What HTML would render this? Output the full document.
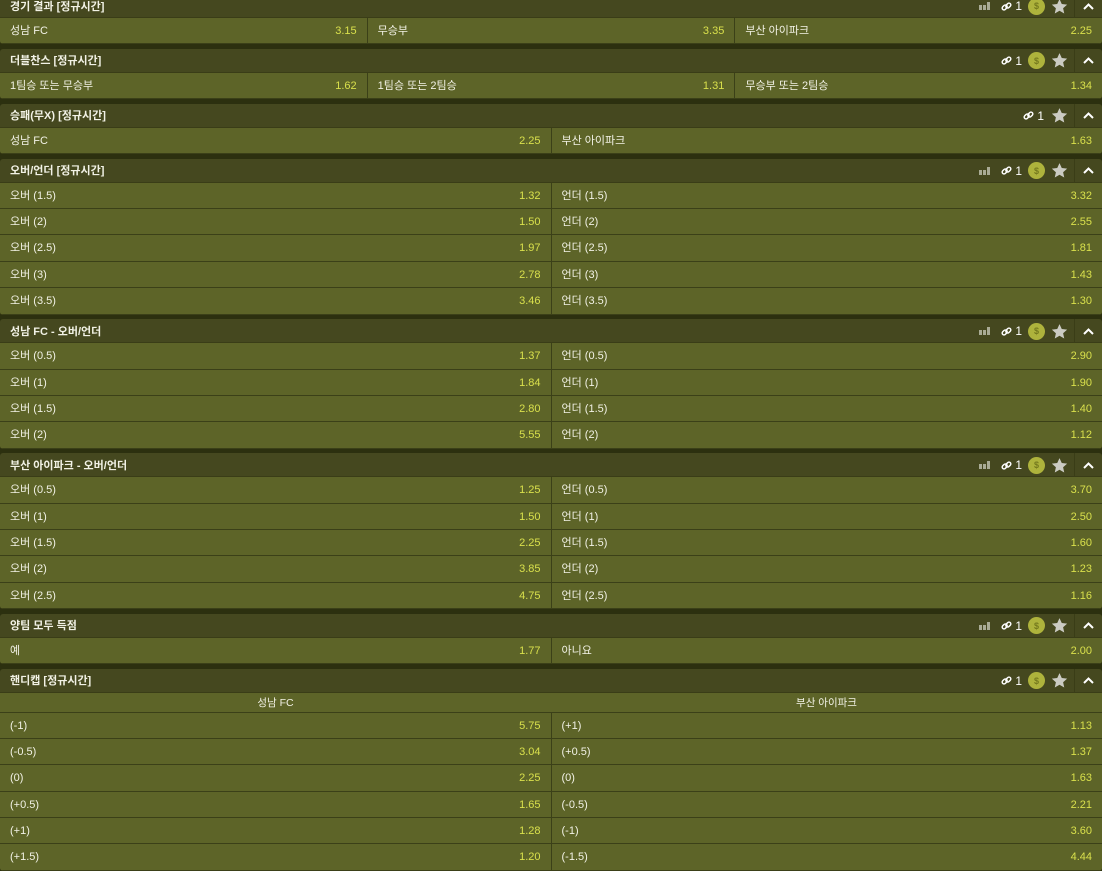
<!DOCTYPE html>
<html><head><meta charset="utf-8"><style>
*{box-sizing:border-box;margin:0;padding:0}
body{width:1102px;height:871px;overflow:hidden;background:#2c300f;font-family:"Liberation Sans","Noto Sans CJK KR",sans-serif;font-size:11px;color:#f2f2e6}
.wrap{position:relative;top:-6px}
.blk{margin-bottom:4.5px;border-radius:3px;overflow:hidden}
.hd{height:24px;background:#45481f;display:flex;align-items:center;padding-left:10px;font-weight:bold;position:relative;border-bottom:1px solid #3a3d17}
.ic{position:absolute;right:0;top:0;height:24px;display:flex;align-items:center}
.ic .bar{width:11px;height:8px;margin-right:11px;display:flex;align-items:flex-end;gap:1px}
.ic .bar i{display:block;width:3px;background:#a9ab95}
.lnk{color:#fff;font-weight:normal;font-size:12px;margin-right:6px;display:flex;align-items:center}
.coin{width:17px;height:17px;border-radius:50%;background:#aeb33c;color:#757a1e;font-size:9px;display:flex;align-items:center;justify-content:center;margin-right:5px;font-weight:bold}
.star{width:18px;display:flex;justify-content:center;margin-right:6px}
.car{width:28px;height:24px;border-left:1px solid #3a3d17;display:flex;align-items:center;justify-content:center}
.row{display:flex;height:26.4px;background:#5d6428;border-bottom:1px solid #3b4018;overflow:hidden}
.c{flex:1;display:block;padding:0 10px;border-right:1px solid #3b4018;line-height:26px;white-space:nowrap}
.c:last-child{border-right:none}
.c b{font-weight:normal;color:#d9e04c;float:right}
.sub{height:20px;background:#5d6428;display:flex;border-bottom:1px solid #3b4018}
.sub div{flex:1;text-align:center;line-height:20px;font-size:10.5px}
</style></head><body><div class="wrap">
<svg width="0" height="0" style="position:absolute"><defs>
<symbol id="st" viewBox="0 0 24 24"><path d="M12 1.5l3.2 7 7.6.8-5.7 5.1 1.6 7.5L12 18l-6.7 3.9 1.6-7.5L1.2 9.3l7.6-.8z" fill="#cbcbc3"/></symbol>
<symbol id="lk" viewBox="0 0 12 12"><g fill="none" stroke="#fff" stroke-width="1.6"><rect x="1" y="5" width="6" height="4" rx="2" transform="rotate(-45 4 7)"/><rect x="5" y="3" width="6" height="4" rx="2" transform="rotate(-45 8 5)"/></g></symbol>
</defs></svg>

<div class="blk"><div class="hd">경기 결과 [정규시간]<div class="ic"><span class="bar"><i style="height:5px"></i><i style="height:5px"></i><i style="height:8px"></i></span><span class="lnk"><svg width="11" height="11"><use href="#lk"/></svg>&nbsp;1</span><span class="coin">$</span><span class="star"><svg width="17" height="17"><use href="#st"/></svg></span><span class="car"><svg width="11" height="7" viewBox="0 0 11 7"><path d="M1 6L5.5 1.5L10 6" stroke="#fff" stroke-width="2" fill="none"/></svg></span></div></div>
<div class="row"><div class="c"><b>3.15</b>성남 FC</div><div class="c"><b>3.35</b>무승부</div><div class="c"><b>2.25</b>부산 아이파크</div></div></div>

<div class="blk"><div class="hd">더블찬스 [정규시간]<div class="ic"><span class="lnk"><svg width="11" height="11"><use href="#lk"/></svg>&nbsp;1</span><span class="coin">$</span><span class="star"><svg width="17" height="17"><use href="#st"/></svg></span><span class="car"><svg width="11" height="7" viewBox="0 0 11 7"><path d="M1 6L5.5 1.5L10 6" stroke="#fff" stroke-width="2" fill="none"/></svg></span></div></div>
<div class="row"><div class="c"><b>1.62</b>1팀승 또는 무승부</div><div class="c"><b>1.31</b>1팀승 또는 2팀승</div><div class="c"><b>1.34</b>무승부 또는 2팀승</div></div></div>

<div class="blk"><div class="hd">승패(무X) [정규시간]<div class="ic"><span class="lnk"><svg width="11" height="11"><use href="#lk"/></svg>&nbsp;1</span><span class="star"><svg width="17" height="17"><use href="#st"/></svg></span><span class="car"><svg width="11" height="7" viewBox="0 0 11 7"><path d="M1 6L5.5 1.5L10 6" stroke="#fff" stroke-width="2" fill="none"/></svg></span></div></div>
<div class="row"><div class="c"><b>2.25</b>성남 FC</div><div class="c"><b>1.63</b>부산 아이파크</div></div></div>

<div class="blk"><div class="hd">오버/언더 [정규시간]<div class="ic"><span class="bar"><i style="height:5px"></i><i style="height:5px"></i><i style="height:8px"></i></span><span class="lnk"><svg width="11" height="11"><use href="#lk"/></svg>&nbsp;1</span><span class="coin">$</span><span class="star"><svg width="17" height="17"><use href="#st"/></svg></span><span class="car"><svg width="11" height="7" viewBox="0 0 11 7"><path d="M1 6L5.5 1.5L10 6" stroke="#fff" stroke-width="2" fill="none"/></svg></span></div></div>
<div class="row"><div class="c"><b>1.32</b>오버 (1.5)</div><div class="c"><b>3.32</b>언더 (1.5)</div></div>
<div class="row"><div class="c"><b>1.50</b>오버 (2)</div><div class="c"><b>2.55</b>언더 (2)</div></div>
<div class="row"><div class="c"><b>1.97</b>오버 (2.5)</div><div class="c"><b>1.81</b>언더 (2.5)</div></div>
<div class="row"><div class="c"><b>2.78</b>오버 (3)</div><div class="c"><b>1.43</b>언더 (3)</div></div>
<div class="row"><div class="c"><b>3.46</b>오버 (3.5)</div><div class="c"><b>1.30</b>언더 (3.5)</div></div></div>

<div class="blk"><div class="hd">성남 FC - 오버/언더<div class="ic"><span class="bar"><i style="height:5px"></i><i style="height:5px"></i><i style="height:8px"></i></span><span class="lnk"><svg width="11" height="11"><use href="#lk"/></svg>&nbsp;1</span><span class="coin">$</span><span class="star"><svg width="17" height="17"><use href="#st"/></svg></span><span class="car"><svg width="11" height="7" viewBox="0 0 11 7"><path d="M1 6L5.5 1.5L10 6" stroke="#fff" stroke-width="2" fill="none"/></svg></span></div></div>
<div class="row"><div class="c"><b>1.37</b>오버 (0.5)</div><div class="c"><b>2.90</b>언더 (0.5)</div></div>
<div class="row"><div class="c"><b>1.84</b>오버 (1)</div><div class="c"><b>1.90</b>언더 (1)</div></div>
<div class="row"><div class="c"><b>2.80</b>오버 (1.5)</div><div class="c"><b>1.40</b>언더 (1.5)</div></div>
<div class="row"><div class="c"><b>5.55</b>오버 (2)</div><div class="c"><b>1.12</b>언더 (2)</div></div></div>

<div class="blk"><div class="hd">부산 아이파크 - 오버/언더<div class="ic"><span class="bar"><i style="height:5px"></i><i style="height:5px"></i><i style="height:8px"></i></span><span class="lnk"><svg width="11" height="11"><use href="#lk"/></svg>&nbsp;1</span><span class="coin">$</span><span class="star"><svg width="17" height="17"><use href="#st"/></svg></span><span class="car"><svg width="11" height="7" viewBox="0 0 11 7"><path d="M1 6L5.5 1.5L10 6" stroke="#fff" stroke-width="2" fill="none"/></svg></span></div></div>
<div class="row"><div class="c"><b>1.25</b>오버 (0.5)</div><div class="c"><b>3.70</b>언더 (0.5)</div></div>
<div class="row"><div class="c"><b>1.50</b>오버 (1)</div><div class="c"><b>2.50</b>언더 (1)</div></div>
<div class="row"><div class="c"><b>2.25</b>오버 (1.5)</div><div class="c"><b>1.60</b>언더 (1.5)</div></div>
<div class="row"><div class="c"><b>3.85</b>오버 (2)</div><div class="c"><b>1.23</b>언더 (2)</div></div>
<div class="row"><div class="c"><b>4.75</b>오버 (2.5)</div><div class="c"><b>1.16</b>언더 (2.5)</div></div></div>

<div class="blk"><div class="hd">양팀 모두 득점<div class="ic"><span class="bar"><i style="height:5px"></i><i style="height:5px"></i><i style="height:8px"></i></span><span class="lnk"><svg width="11" height="11"><use href="#lk"/></svg>&nbsp;1</span><span class="coin">$</span><span class="star"><svg width="17" height="17"><use href="#st"/></svg></span><span class="car"><svg width="11" height="7" viewBox="0 0 11 7"><path d="M1 6L5.5 1.5L10 6" stroke="#fff" stroke-width="2" fill="none"/></svg></span></div></div>
<div class="row"><div class="c"><b>1.77</b>예</div><div class="c"><b>2.00</b>아니요</div></div></div>

<div class="blk"><div class="hd">핸디캡 [정규시간]<div class="ic"><span class="lnk"><svg width="11" height="11"><use href="#lk"/></svg>&nbsp;1</span><span class="coin">$</span><span class="star"><svg width="17" height="17"><use href="#st"/></svg></span><span class="car"><svg width="11" height="7" viewBox="0 0 11 7"><path d="M1 6L5.5 1.5L10 6" stroke="#fff" stroke-width="2" fill="none"/></svg></span></div></div>
<div class="sub"><div>성남 FC</div><div>부산 아이파크</div></div>
<div class="row"><div class="c"><b>5.75</b>(-1)</div><div class="c"><b>1.13</b>(+1)</div></div>
<div class="row"><div class="c"><b>3.04</b>(-0.5)</div><div class="c"><b>1.37</b>(+0.5)</div></div>
<div class="row"><div class="c"><b>2.25</b>(0)</div><div class="c"><b>1.63</b>(0)</div></div>
<div class="row"><div class="c"><b>1.65</b>(+0.5)</div><div class="c"><b>2.21</b>(-0.5)</div></div>
<div class="row"><div class="c"><b>1.28</b>(+1)</div><div class="c"><b>3.60</b>(-1)</div></div>
<div class="row"><div class="c"><b>1.20</b>(+1.5)</div><div class="c"><b>4.44</b>(-1.5)</div></div></div>

</div></body></html>
